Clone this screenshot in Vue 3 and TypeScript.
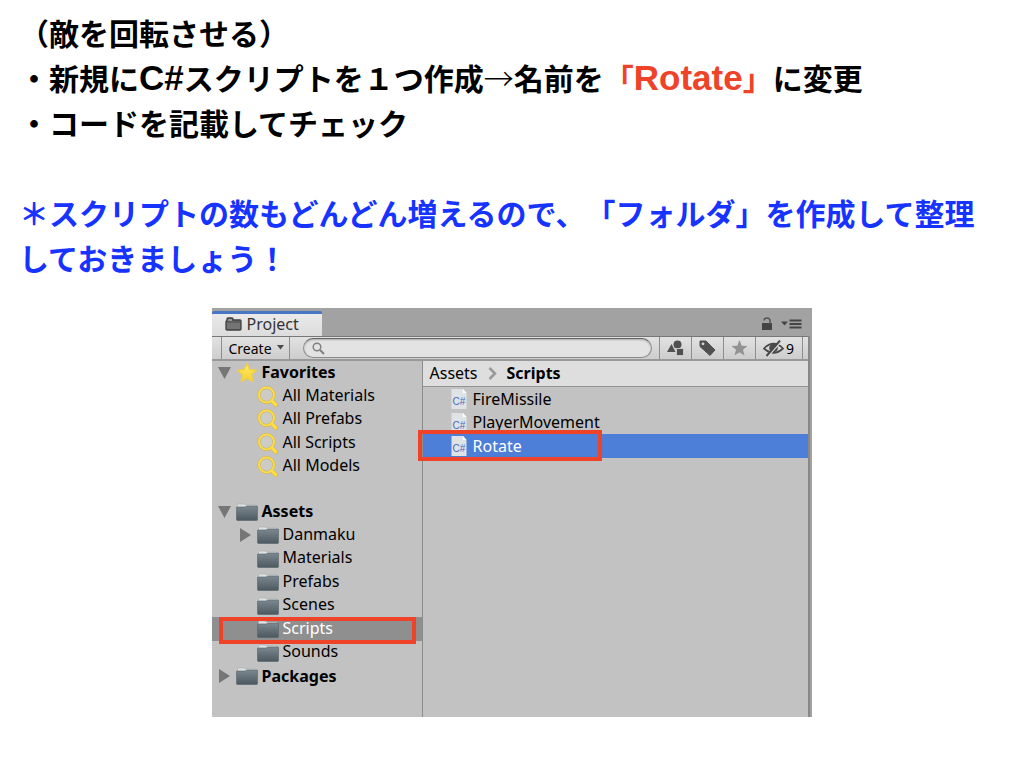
<script setup lang="ts">
import { ref } from 'vue'

interface TreeRow {
  label: string
  level: 0 | 1
  icon: 'star' | 'search' | 'folder'
  arrow?: 'open' | 'closed'
  selected?: boolean
}

const query = ref('')

const groups: TreeRow[][] = [
  [
    { label: 'Favorites', level: 0, icon: 'star', arrow: 'open' },
    { label: 'All Materials', level: 1, icon: 'search' },
    { label: 'All Prefabs', level: 1, icon: 'search' },
    { label: 'All Scripts', level: 1, icon: 'search' },
    { label: 'All Models', level: 1, icon: 'search' },
  ],
  [
    { label: 'Assets', level: 0, icon: 'folder', arrow: 'open' },
    { label: 'Danmaku', level: 1, icon: 'folder', arrow: 'closed' },
    { label: 'Materials', level: 1, icon: 'folder' },
    { label: 'Prefabs', level: 1, icon: 'folder' },
    { label: 'Scenes', level: 1, icon: 'folder' },
    { label: 'Scripts', level: 1, icon: 'folder', selected: true },
    { label: 'Sounds', level: 1, icon: 'folder' },
    { label: 'Packages', level: 0, icon: 'folder', arrow: 'closed' },
  ],
]

const files = [
  { name: 'FireMissile', selected: false },
  { name: 'PlayerMovement', selected: false },
  { name: 'Rotate', selected: true },
]
</script>

<template>
  <main class="slide">
    <svg class="defs" width="0" height="0" aria-hidden="true">
      <defs>
        <linearGradient id="folderFill" x1="0" y1="0" x2="0" y2="1">
          <stop offset="0" stop-color="#7d8990" />
          <stop offset="1" stop-color="#4c585f" />
        </linearGradient>
        <linearGradient id="starFill" x1="0" y1="0" x2="0" y2="1">
          <stop offset="0" stop-color="#fdec6a" />
          <stop offset="1" stop-color="#f8d030" />
        </linearGradient>
      </defs>
    </svg>

    <section class="notes">
      <p>（敵を回転させる）</p>
      <p>・新規に<span class="latin">C#</span>スクリプトを１つ作成<span class="arrow">→</span>名前を<span class="red">「<span class="latin">Rotate</span>」</span>に変更</p>
      <p>・コードを記載してチェック</p>
      <p class="tip">＊スクリプトの数もどんどん増えるので、「フォルダ」を作成して整理しておきましょう！</p>
    </section>

    <section class="panel" aria-label="Project">
      <header class="tabs">
        <button class="tab" type="button">
          <svg width="17" height="14" viewBox="0 0 17 14" aria-hidden="true">
            <path d="M1 12.500V4.500L2 3V2Q2 1 3 1H7Q8 1 8 2V3H15Q16 3 16 4V12Q16 13 15 13H2Q1 13 1 12Z" fill="#747474" stroke="#3f3f3f" stroke-width="1.300" />
            <path d="M2 5H15" stroke="#4a4a4a" />
            <path d="M3.500 3H7" stroke="#bbb" />
          </svg>
          Project
        </button>
        <div class="window-tools">
          <button type="button" aria-label="Lock">
            <svg width="12" height="14" viewBox="0 0 12 14">
              <rect x="1" y="6" width="10" height="7" fill="#444" />
              <path d="M3 3.500Q3 1 6 1T9 4V7" fill="none" stroke="#555" stroke-width="1.500" />
            </svg>
          </button>
          <button type="button" aria-label="Panel menu">
            <svg width="21" height="10" viewBox="0 0 21 10">
              <path d="M0 2.500H7L3.500 6.500Z" fill="#444" />
              <path d="M8.500 1.500H20.500M8.500 5H20.500M8.500 8.500H20.500" stroke="#444" stroke-width="1.800" />
            </svg>
          </button>
        </div>
      </header>

      <div class="frame">
        <div class="toolbar">
          <button class="create" type="button" aria-haspopup="menu">
            Create
            <svg width="7" height="5" viewBox="0 0 7 5" aria-hidden="true"><path d="M0 0H7L3.500 4.500Z" fill="#4a4a4a" /></svg>
          </button>
          <label class="search">
            <svg width="13" height="13" viewBox="0 0 13 13" aria-hidden="true">
              <circle cx="5" cy="5" r="3.800" fill="none" stroke="#808080" stroke-width="1.500" />
              <path d="M8 8L12 12" stroke="#808080" stroke-width="2" />
            </svg>
            <input v-model="query" type="text" aria-label="Search" />
          </label>
          <button class="tool" type="button" aria-label="Search by type">
            <svg width="17" height="16" viewBox="0 0 17 16">
              <path d="M0 12L4.500 4L8.500 12Z" fill="#505050" />
              <circle cx="10.500" cy="4.500" r="4" fill="#505050" />
              <path d="M9.500 8.500H16.500V15.500H9.500Z" fill="#505050" stroke="#d8d8d8" stroke-width=".8" />
            </svg>
          </button>
          <button class="tool" type="button" aria-label="Search by label">
            <svg width="17" height="16" viewBox="0 0 17 16">
              <path d="M1 1H7L16 10L11 15.500L1 6.500Z" fill="#505050" stroke="#505050" stroke-linejoin="round" />
              <circle cx="4" cy="3.800" r="1.400" fill="#d8d8d8" />
            </svg>
          </button>
          <button class="tool" type="button" aria-label="Save search">
            <svg width="17" height="16" viewBox="0 0 17 16">
              <path d="M8.500 0L10.700 5.700L16.500 6L12 9.700L13.500 15.500L8.500 12.300L3.500 15.500L5 9.700L.5 6L6.300 5.700Z" fill="#929292" />
            </svg>
          </button>
          <button class="tool hidden-count" type="button" aria-label="Hidden packages: 9">
            <svg width="21" height="17" viewBox="0 0 21 17">
              <path d="M1 8.500Q10.500-1 20 8.500Q10.500 17 1 8.500Z" fill="none" stroke="#4a4a4a" stroke-width="1.700" />
              <circle cx="10.500" cy="8" r="4.300" fill="#4a4a4a" />
              <path d="M5.500 16L18.500 1" stroke="#dadada" stroke-width="1.500" />
              <path d="M3.500 16L17 .5" stroke="#4a4a4a" stroke-width="2" />
            </svg>
            9
          </button>
        </div>

        <div class="content">
          <nav class="tree" aria-label="Folders">
            <ul v-for="(rows, g) in groups" :key="g">
              <li
                v-for="row in rows"
                :key="row.label"
                :class="['row', 'level-' + row.level, { selected: row.selected }]"
              >
                <span class="toggle">
                  <svg v-if="row.arrow === 'open'" width="13" height="12" viewBox="0 0 13 12"><path d="M0 0H13L6.500 12Z" fill="#767676" /></svg>
                  <svg v-else-if="row.arrow === 'closed'" width="13" height="14" viewBox="0 0 13 14"><path d="M1 0L12 7L1 14Z" fill="#767676" /></svg>
                </span>
                <svg v-if="row.icon === 'star'" width="22" height="21" viewBox="0 0 22 21">
                  <path d="M11 1.500L13.800 7.500L20.300 8.200L15.500 12.600L16.800 19.300L11 16.100L5.200 19.300L6.500 12.600L1.700 8.200L8.200 7.500Z" fill="url(#starFill)" stroke="#f0cf45" stroke-width="1.500" stroke-linejoin="round" />
                </svg>
                <svg v-else-if="row.icon === 'search'" width="22" height="21" viewBox="0 0 22 21">
                  <circle cx="9.500" cy="9" r="7.500" fill="#cbcbc8" stroke="#c9ae48" stroke-width="2.800" />
                  <path d="M14.500 14.500L19 19" stroke="#dbb92f" stroke-width="4" stroke-linecap="round" />
                  <path d="M14.500 14.500L18.800 18.800" stroke="#ffdf4a" stroke-width="3" stroke-linecap="round" />
                  <circle cx="9.500" cy="9" r="7.500" fill="none" stroke="#fbdc50" stroke-width="2" />
                </svg>
                <svg v-else width="22" height="18" viewBox="0 0 22 18">
                  <path d="M1.500 4V2Q1.500 1 2.500 1H8Q9 1 9.500 2H19Q20.500 2 20.500 3V5H1.500Z" fill="#dfe2e2" stroke="#a7adaf" stroke-width=".6" />
                  <path d="M.5 4.500Q.5 4 1 4H9L11 3H21Q21.500 3 21.500 3.500V16.500Q21.500 17.500 20.500 17.500H1.500Q.5 17.500 .5 16.500Z" fill="url(#folderFill)" stroke="#56636a" stroke-width=".6" />
                </svg>
                <span class="label">{{ row.label }}</span>
                <span v-if="row.selected" class="highlight" />
              </li>
            </ul>
          </nav>

          <div class="assets">
            <div class="crumbs">
              <a href="#">Assets</a>
              <svg width="9" height="13" viewBox="0 0 9 13" aria-hidden="true"><path d="M1.500 1L7 6.500L1.500 12" fill="none" stroke="#999" stroke-width="2.500" /></svg>
              <strong>Scripts</strong>
            </div>
            <ul class="files">
              <li v-for="file in files" :key="file.name" :class="['file', { selected: file.selected }]">
                <svg width="16" height="20" viewBox="0 0 16 20" aria-hidden="true">
                  <path d="M.5 0H12L15.500 4V20H.5Z" fill="#e0e3e5" />
                  <path d="M12 0L15.500 4H12Z" fill="#fff" />
                  <text x="8" y="16" text-anchor="middle" class="badge">C#</text>
                </svg>
                <span>{{ file.name }}</span>
                <span v-if="file.selected" class="highlight" />
              </li>
            </ul>
          </div>
        </div>
      </div>
    </section>
  </main>
</template>

<style>
body {
  margin: 0;
  background: #fff;
}
</style>

<style scoped>
.slide {
  padding: 10px 20px 48px 19px;
  color: #000;
}
.defs {
  position: absolute;
}
p,
ul {
  margin: 0;
  padding: 0;
  list-style: none;
}
svg {
  flex: none;
}
.notes {
  font: 700 30px/45px "Noto Sans CJK JP", sans-serif;
  text-spacing-trim: space-all;
}
.latin {
  font-family: "Liberation Sans", sans-serif;
  font-size: 35px;
  line-height: 1;
}
.arrow {
  font-weight: 300;
}
.red {
  color: #ee4328;
}
.tip {
  margin-top: 45px;
  color: #1733ff;
}
.panel {
  max-width: 600px;
  margin: 28px auto 0;
  background: #a2a2a2;
  font: 16px/23px "Noto Sans", sans-serif;
}
button {
  margin: 0;
  padding: 0;
  border: 0;
  background: none;
  font: inherit;
  color: inherit;
}
.tabs {
  display: flex;
  justify-content: space-between;
  padding-top: 3px;
}
.tab {
  display: flex;
  align-items: center;
  gap: 5px;
  box-sizing: border-box;
  width: 110px;
  height: 25px;
  padding: 0 0 2px 13px;
  border-top: 3px solid #4876c4;
  border-radius: 2px 2px 0 0;
  background: linear-gradient(#eaeaea, #dcdcdc);
  color: #333;
}
.window-tools {
  display: flex;
  align-items: center;
  gap: 8px;
  padding: 1px 10px 0 0;
}
.window-tools button {
  display: flex;
}
.frame {
  margin-right: 2px;
  border-right: 2px solid #888;
}
.toolbar {
  display: flex;
  align-items: center;
  box-sizing: border-box;
  height: 25px;
  padding: 0 5px 0 9px;
  border-top: 1px solid #777;
  border-bottom: 2px solid #999;
  background: linear-gradient(#e2e2e2, #cdcdcd);
}
.create,
.tool {
  display: flex;
  align-items: center;
  justify-content: center;
  box-sizing: border-box;
  height: 22px;
  border-left: 1px solid #8e8e8e;
}
.create {
  justify-content: space-between;
  width: 69px;
  padding: 0 5px 0 7px;
  border-right: 1px solid #8e8e8e;
  font-size: 14px;
}
.create svg {
  margin-bottom: 2px;
}
.tool {
  width: 32px;
}
.hidden-count {
  gap: 2px;
  width: 48px;
  border-right: 1px solid #8e8e8e;
  font-size: 14px;
}
.search {
  display: flex;
  align-items: center;
  flex: 1;
  gap: 6px;
  box-sizing: border-box;
  min-width: 0;
  height: 20px;
  margin: 0 7px 0 13px;
  padding: 0 8px;
  border: 1px solid #8c8c8c;
  border-top-color: #666;
  border-radius: 10px;
  background: #e3e3e3;
  box-shadow: inset 0 1px 2px #aaa;
}
.search input {
  flex: 1;
  min-width: 0;
  padding: 0;
  border: 0;
  outline: 0;
  background: none;
  font: 14px/16px "Noto Sans", sans-serif;
}
.content {
  display: flex;
  background: #c2c2c2;
}
.tree {
  flex: none;
  width: 210px;
  padding-bottom: 29px;
}
.tree ul + ul {
  margin-top: 22px;
}
.row {
  position: relative;
  display: flex;
  align-items: center;
  height: 23px;
  padding-left: 6px;
}
.row:nth-child(even) {
  height: 24px;
}
.level-1 {
  padding-left: 27px;
}
.toggle {
  display: flex;
  width: 18px;
}
.label {
  margin-left: 4px;
}
.level-1 .label {
  margin-bottom: 2px;
}
.level-0 .label,
strong {
  font-weight: 700;
}
.row.selected {
  background: #8f8f8f;
  color: #fff;
}
.highlight {
  position: absolute;
  box-sizing: border-box;
  border: 4px solid #ee4328;
}
.row .highlight {
  inset: 0 6px -3px 7px;
}
.assets {
  flex: 1;
  min-width: 0;
  border-left: 1px solid #8c8c8c;
}
.crumbs {
  display: flex;
  align-items: center;
  gap: 10px;
  height: 25px;
  padding-left: 7px;
  border-bottom: 1px solid #949494;
  background: #dedede;
}
.crumbs a {
  color: inherit;
  text-decoration: none;
}
.file {
  position: relative;
  display: flex;
  align-items: center;
  gap: 6px;
  height: 24px;
  padding-left: 28px;
}
.file:nth-child(2) {
  height: 23px;
}
.file.selected {
  background: #4d7ed8;
  color: #fff;
}
.file .highlight {
  left: -5px;
  top: -4px;
  bottom: -3px;
  width: 184px;
}
.badge {
  font: 10px "Liberation Sans", sans-serif;
  fill: #4668c0;
}
</style>
